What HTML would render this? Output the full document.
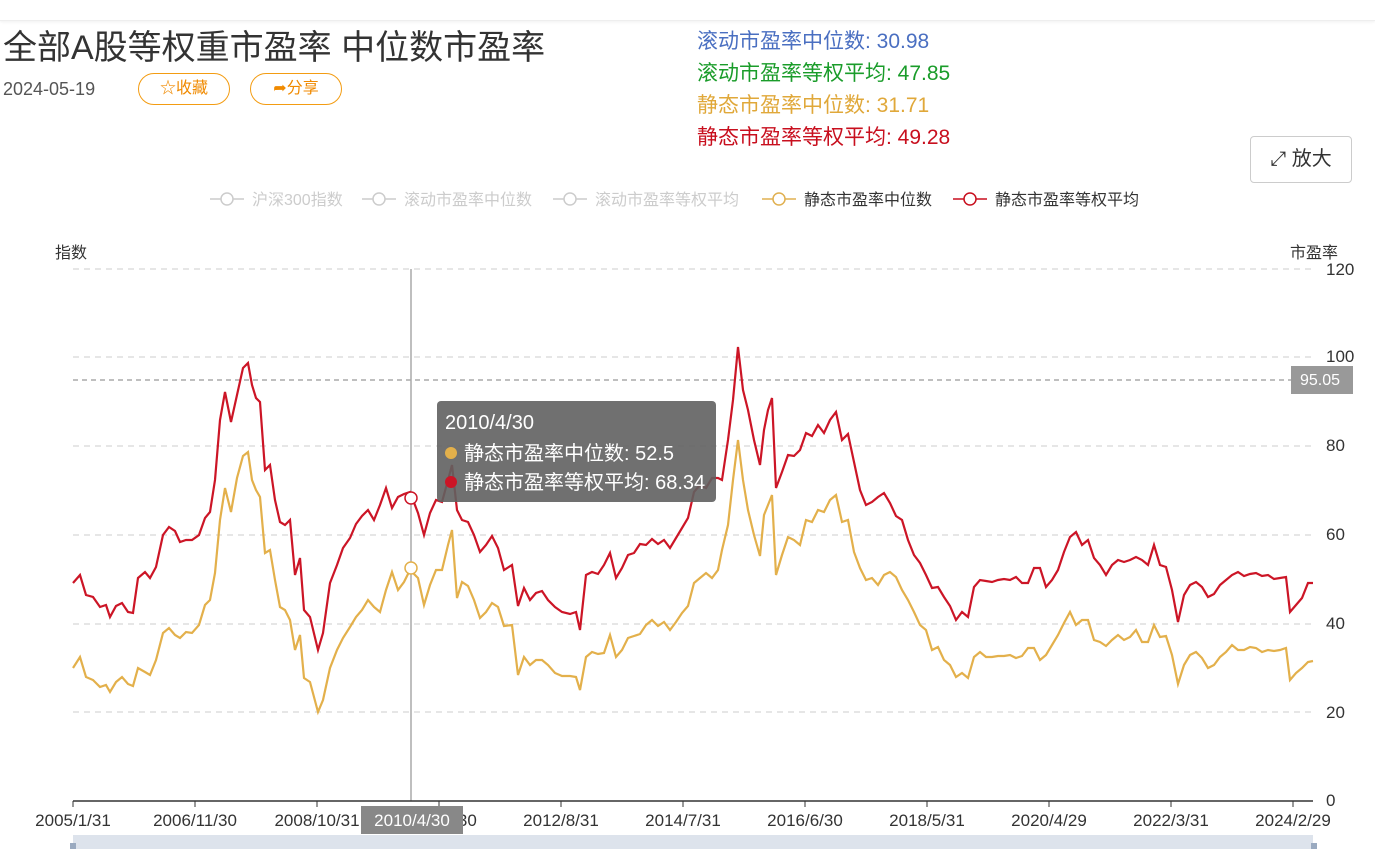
<!DOCTYPE html>
<html><head><meta charset="utf-8"><style>
body{margin:0;width:1375px;height:849px;overflow:hidden;background:#fff;font-family:"Liberation Sans","Noto Sans CJK SC",sans-serif;position:relative}
.a{position:absolute;white-space:nowrap}
.btn{position:absolute;border:1px solid #f39c12;border-radius:16px;color:#f08a00;font-size:16px;text-align:center;height:30px;line-height:30px}
.r{font-size:21px}
</style></head><body>
<div class="a" style="left:0;top:0;width:1375px;height:20px;border-bottom:1px solid #eee;box-shadow:0 1px 3px #f0f0f0"></div>
<div class="a" style="left:3px;top:20px;font-size:34px;color:#333">全部A股等权重市盈率 中位数市盈率</div>
<div class="a" style="left:3px;top:79px;font-size:18px;color:#555">2024-05-19</div>
<div class="btn" style="left:138px;top:73px;width:90px">☆收藏</div>
<div class="btn" style="left:250px;top:73px;width:90px">➦分享</div>
<div class="a r" style="left:697px;top:25px;color:#4a6fc1">滚动市盈率中位数: 30.98</div>
<div class="a r" style="left:697px;top:57px;color:#1a9c2a">滚动市盈率等权平均: 47.85</div>
<div class="a r" style="left:697px;top:89px;color:#e0a83a">静态市盈率中位数: 31.71</div>
<div class="a r" style="left:697px;top:121px;color:#c80f1e">静态市盈率等权平均: 49.28</div>
<div class="a" style="left:1250px;top:136px;width:100px;height:45px;border:1px solid #ccc;border-radius:4px;font-size:20px;line-height:45px;text-align:center;color:#333">⤢ 放大</div>
<svg class="a" style="left:0;top:0" width="1375" height="849">
<g font-size="16" font-family="Liberation Sans,Noto Sans CJK SC,sans-serif">
<g fill="none" stroke="#ccc" stroke-width="1.5"><line x1="210" y1="199" x2="244" y2="199"/><circle cx="227" cy="199" r="6" fill="#fff"/>
<line x1="362" y1="199" x2="396" y2="199"/><circle cx="379" cy="199" r="6" fill="#fff"/>
<line x1="553" y1="199" x2="587" y2="199"/><circle cx="570" cy="199" r="6" fill="#fff"/></g>
<text x="252" y="205" fill="#ccc">沪深300指数</text><text x="404" y="205" fill="#ccc">滚动市盈率中位数</text><text x="595" y="205" fill="#ccc">滚动市盈率等权平均</text>
<line x1="762" y1="199" x2="796" y2="199" stroke="#e0b050" stroke-width="1.5"/><circle cx="779" cy="199" r="6" fill="#fff" stroke="#e0b050" stroke-width="1.5"/>
<text x="804" y="205" fill="#333">静态市盈率中位数</text>
<line x1="953" y1="199" x2="987" y2="199" stroke="#c80f1e" stroke-width="1.5"/><circle cx="970" cy="199" r="6" fill="#fff" stroke="#c80f1e" stroke-width="1.5"/>
<text x="995" y="205" fill="#333">静态市盈率等权平均</text>
<text x="55" y="258" fill="#333">指数</text><text x="1290" y="258" fill="#333">市盈率</text>
</g>
<g stroke="#ddd" stroke-dasharray="6,5" stroke-width="1.5"><line x1="73" y1="269" x2="1313" y2="269"/><line x1="73" y1="357" x2="1313" y2="357"/><line x1="73" y1="446" x2="1313" y2="446"/><line x1="73" y1="535" x2="1313" y2="535"/><line x1="73" y1="624" x2="1313" y2="624"/><line x1="73" y1="712" x2="1313" y2="712"/></g>
<line x1="73" y1="380" x2="1295" y2="380" stroke="#999" stroke-dasharray="5,4" stroke-width="1.2"/>
<rect x="1291" y="366" width="62" height="28" fill="#999"/><text x="1300" y="385" fill="#fff" font-size="16" font-family="Liberation Sans,sans-serif">95.05</text>
<g font-size="17" fill="#333" font-family="Liberation Sans,sans-serif"><text x="1326" y="275">120</text><text x="1326" y="362">100</text><text x="1326" y="451">80</text><text x="1326" y="540">60</text><text x="1326" y="629">40</text><text x="1326" y="718">20</text><text x="1326" y="806">0</text></g>
<line x1="411" y1="269" x2="411" y2="801" stroke="#aaa" stroke-width="1.5"/>
<polyline fill="none" stroke="#e3b04b" stroke-width="2.2" points="73,668 80,657 86,677 93,680 100,687 106,685 110,692 116,682 122,677 128,684 133,686 138,668 145,672 150,675 156,660 163,633 169,628 175,635 180,638 186,632 192,633 199,625 205,605 210,600 215,573 220,520 225,488 231,512 237,478 243,456 248,452 252,480 256,490 260,497 265,553 270,550 275,580 280,607 285,610 290,620 295,650 300,635 304,678 310,682 318,712 323,700 330,668 337,650 343,638 350,627 356,617 362,610 368,600 374,607 380,612 386,590 392,572 398,590 404,582 410,570 418,578 424,605 430,585 436,570 442,570 448,545 452,530 457,598 462,582 468,586 474,600 480,618 486,612 492,603 498,607 504,626 512,625 518,675 524,657 530,665 536,660 542,660 548,665 555,673 562,676 570,676 576,677 580,690 586,657 592,652 598,654 604,653 610,635 616,657 622,650 628,638 634,636 640,634 646,625 652,620 658,626 664,622 670,630 676,622 682,613 688,606 694,583 700,578 706,573 712,578 718,570 722,550 728,525 733,480 738,440 743,480 748,510 754,535 760,556 764,515 768,505 772,495 776,575 782,555 788,537 794,540 800,545 806,520 812,522 818,510 824,512 830,500 836,495 842,522 848,520 854,552 860,568 866,580 872,578 878,585 884,575 890,572 896,577 902,590 908,600 914,612 920,625 926,630 932,650 938,647 944,660 950,665 956,677 962,673 968,678 974,657 980,652 986,657 992,657 998,656 1004,656 1010,655 1016,658 1022,656 1028,648 1034,648 1040,660 1046,655 1052,645 1058,635 1064,623 1070,612 1076,625 1082,620 1088,620 1094,640 1100,642 1106,646 1112,640 1118,635 1124,640 1130,637 1136,630 1142,642 1148,642 1154,625 1160,637 1166,636 1172,655 1178,684 1184,665 1190,655 1196,652 1202,658 1208,668 1214,665 1220,657 1226,652 1232,645 1238,650 1244,650 1250,647 1256,648 1262,652 1268,650 1274,651 1280,650 1286,648 1290,680 1296,673 1302,668 1308,662 1313,661"/>
<polyline fill="none" stroke="#cc1526" stroke-width="2.2" points="73,583 80,575 86,595 93,597 100,607 106,605 110,617 116,606 122,603 128,612 133,613 138,578 145,572 150,578 156,567 163,535 169,527 175,531 180,542 186,540 192,540 199,535 205,518 210,512 215,480 220,420 225,392 231,422 237,395 243,368 248,363 252,385 256,398 260,402 265,470 270,465 275,500 280,522 285,525 290,520 295,575 300,558 304,610 310,617 318,650 323,633 330,583 337,565 343,548 350,538 356,524 362,516 368,510 374,520 380,505 386,488 392,508 398,497 404,494 410,492 418,513 424,535 430,513 436,500 442,502 448,480 452,465 457,510 462,520 468,522 474,535 480,552 486,545 492,536 498,548 504,570 512,565 518,606 524,588 530,600 536,593 542,591 548,600 555,607 562,612 570,614 576,612 580,630 586,575 592,572 598,574 604,565 610,553 616,578 622,568 628,555 634,553 640,544 646,545 652,539 658,544 664,540 670,548 676,538 682,528 688,518 694,492 700,485 706,488 712,478 718,478 722,480 728,440 733,400 738,347 743,390 748,410 754,440 760,465 764,430 768,410 772,398 776,488 782,472 788,455 794,456 800,450 806,433 812,436 818,425 824,433 830,420 836,412 842,440 848,434 854,462 860,490 866,505 872,502 878,497 884,493 890,503 896,516 902,520 908,540 914,555 920,563 926,575 932,588 938,587 944,597 950,606 956,620 962,612 968,617 974,587 980,580 986,581 992,582 998,580 1004,579 1010,580 1016,577 1022,583 1028,583 1034,568 1040,568 1046,587 1052,580 1058,570 1064,552 1070,537 1076,532 1082,545 1088,540 1094,558 1100,565 1106,575 1112,565 1118,560 1124,562 1130,560 1136,557 1142,560 1148,565 1154,545 1160,565 1166,567 1172,590 1178,622 1184,595 1190,585 1196,582 1202,587 1208,597 1214,594 1220,585 1226,580 1232,575 1238,572 1244,576 1250,574 1256,573 1262,576 1268,575 1274,579 1280,578 1286,577 1290,612 1296,605 1302,598 1308,583 1313,583"/>
<circle cx="411" cy="498" r="6" fill="#fff" stroke="#cc1526" stroke-width="1.5"/>
<circle cx="411" cy="568" r="6" fill="#fff" stroke="#e3b04b" stroke-width="1.5"/>
<line x1="73" y1="801" x2="1313" y2="801" stroke="#333" stroke-width="1.5"/>
<g stroke="#333"><line x1="73" y1="801" x2="73" y2="807"/><line x1="195" y1="801" x2="195" y2="807"/><line x1="317" y1="801" x2="317" y2="807"/><line x1="439" y1="801" x2="439" y2="807"/><line x1="561" y1="801" x2="561" y2="807"/><line x1="683" y1="801" x2="683" y2="807"/><line x1="805" y1="801" x2="805" y2="807"/><line x1="927" y1="801" x2="927" y2="807"/><line x1="1049" y1="801" x2="1049" y2="807"/><line x1="1171" y1="801" x2="1171" y2="807"/><line x1="1293" y1="801" x2="1293" y2="807"/></g>
<g font-size="17" fill="#333" font-family="Liberation Sans,sans-serif" text-anchor="middle"><text x="73" y="826">2005/1/31</text><text x="195" y="826">2006/11/30</text><text x="317" y="826">2008/10/31</text><text x="439" y="826">2010/6/30</text><text x="561" y="826">2012/8/31</text><text x="683" y="826">2014/7/31</text><text x="805" y="826">2016/6/30</text><text x="927" y="826">2018/5/31</text><text x="1049" y="826">2020/4/29</text><text x="1171" y="826">2022/3/31</text><text x="1293" y="826">2024/2/29</text></g>
<rect x="361" y="806" width="102" height="28" fill="#888"/><text x="412" y="826" font-size="17" fill="#fff" text-anchor="middle" font-family="Liberation Sans,sans-serif">2010/4/30</text>
<rect x="73" y="835" width="1240" height="14" fill="#dde3ec"/>
<rect x="70" y="843" width="6" height="6" fill="#9aaac0"/><rect x="1311" y="843" width="6" height="6" fill="#9aaac0"/>
<rect x="437" y="401" width="279" height="101" rx="4" fill="#606060" fill-opacity="0.9"/>
<g font-size="20" fill="#fff" font-family="Liberation Sans,Noto Sans CJK SC,sans-serif"><text x="445" y="429">2010/4/30</text>
<circle cx="451" cy="453" r="6" fill="#e3b04b"/><text x="464" y="460">静态市盈率中位数: 52.5</text>
<circle cx="451" cy="482" r="6" fill="#cc1526"/><text x="464" y="489">静态市盈率等权平均: 68.34</text></g>
</svg>
</body></html>
